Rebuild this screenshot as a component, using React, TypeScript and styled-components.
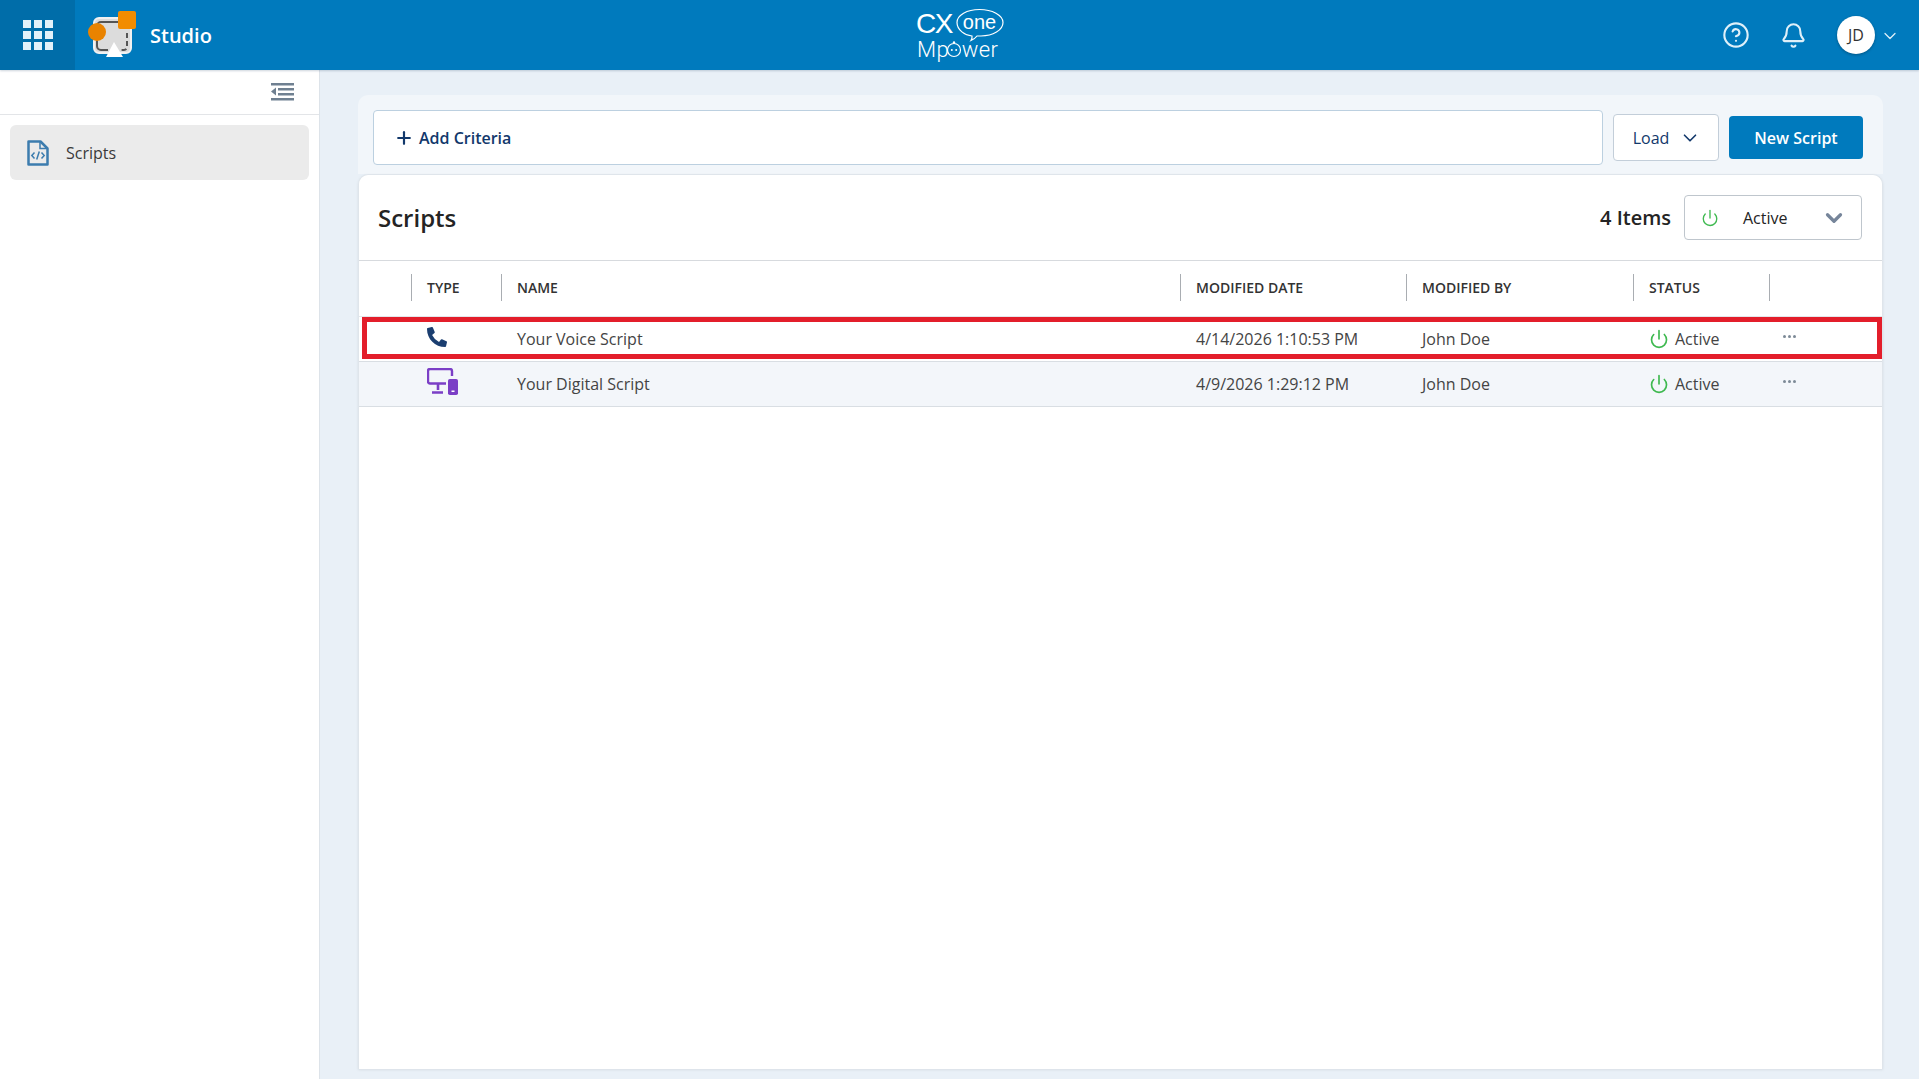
import React from "react";
import styled, { createGlobalStyle } from "styled-components";
import { Bell, ChevronDown, CircleHelp, Plus, Power } from "lucide-react";
import { FaPhoneAlt } from "react-icons/fa";

const Global = createGlobalStyle`
  html, body { margin: 0; padding: 0; height: 100%; }
  body { font-family: "Open Sans", "Noto Sans", sans-serif; color: #333; background: #e9f0f7; }
  #root { height: 100%; }
  * { box-sizing: border-box; }
`;

const Page = styled.div`
  display: flex;
  flex-direction: column;
  height: 1079px;
  overflow: hidden;
`;

const Header = styled.header`
  flex: 0 0 70px;
  display: flex;
  align-items: center;
  background: #007abd;
  box-shadow: 0 1px 2px rgba(0, 40, 80, 0.2);
  position: relative;
  z-index: 2;
`;

const HeaderSide = styled.div<{ $end?: boolean }>`
  flex: 1;
  height: 100%;
  display: flex;
  align-items: center;
  justify-content: ${(p) => (p.$end ? "flex-end" : "flex-start")};
`;

const Launcher = styled.div`
  width: 75px;
  height: 100%;
  background: #006da9;
  display: flex;
  align-items: center;
  justify-content: center;
`;

const AppLogo = styled.svg`
  width: 50px;
  height: 48px;
  margin-left: 13px;
`;

const AppName = styled.span`
  margin-left: 12px;
  color: #fff;
  font-size: 20px;
  font-weight: 600;
`;

const BrandLogo = styled.svg`
  width: 100px;
  height: 56px;
  flex: none;
`;

const HeaderIcon = styled.span<{ $gap: number }>`
  display: flex;
  color: #dff0f9;
  margin-right: ${(p) => p.$gap}px;
`;

const Avatar = styled.span`
  width: 38px;
  height: 38px;
  border-radius: 50%;
  background: #fff;
  color: #333;
  display: flex;
  align-items: center;
  justify-content: center;
  font-size: 16px;
  box-shadow: 0 1px 3px rgba(0, 0, 0, 0.3);
`;

const AvatarCaret = styled.span`
  display: flex;
  color: #dff0f9;
  margin: 2px 19px 0 5px;
`;

const Body = styled.div`
  flex: 1;
  display: flex;
  min-height: 0;
`;

const Sidebar = styled.aside`
  flex: 0 0 320px;
  background: #fff;
  border-right: 1px solid #dde3e9;
`;

const SidebarTop = styled.div`
  height: 45px;
  border-bottom: 1px solid #e3e5e8;
  display: flex;
  align-items: center;
  justify-content: flex-end;
  padding-right: 25px;
`;

const NavItem = styled.div`
  margin: 10px 10px 0;
  height: 55px;
  background: #ebebeb;
  border-radius: 6px;
  display: flex;
  align-items: center;
  padding-left: 17px;
  gap: 17px;
  font-size: 16px;
  color: #3a3a3a;
`;

const Main = styled.main`
  flex: 1;
  min-width: 0;
  padding: 25px 36px 10px 38px;
  display: flex;
  flex-direction: column;
`;

const FilterBar = styled.div`
  flex: 0 0 79px;
  background: #f2f6fa;
  border-radius: 10px 10px 0 0;
  display: flex;
  padding: 15px 20px 0 15px;
  align-items: flex-start;
`;

const CriteriaBox = styled.div`
  width: 1230px;
  height: 55px;
  background: #fff;
  border: 1px solid #bcd0e0;
  border-radius: 4px;
  display: flex;
  align-items: center;
  padding-left: 20px;
  gap: 5px;
  color: #12386b;
  font-size: 16px;
  font-weight: 600;
`;

const LoadButton = styled.div`
  width: 106px;
  height: 47px;
  margin: 4px 0 0 10px;
  background: #fff;
  border: 1px solid #c3ced9;
  border-radius: 4px;
  display: flex;
  align-items: center;
  justify-content: center;
  gap: 10px;
  padding-left: 2px;
  color: #12386b;
  font-size: 16px;
  font-weight: 500;
`;

const PrimaryButton = styled.div`
  width: 134px;
  height: 43px;
  margin: 6px 0 0 10px;
  background: #007abd;
  border-radius: 4px;
  color: #fff;
  display: flex;
  align-items: center;
  justify-content: center;
  font-size: 16px;
  font-weight: 600;
`;

const Card = styled.section`
  flex: 1;
  background: #fff;
  border: 1px solid #dfe5eb;
  border-bottom: 0;
  border-radius: 10px 10px 0 0;
  margin-top: 0;
  box-shadow: 0 1px 3px rgba(0, 0, 0, 0.08);
  display: flex;
  flex-direction: column;
  min-height: 0;
`;

const CardHeader = styled.div`
  flex: 0 0 86px;
  display: flex;
  align-items: center;
  padding: 0 20px 0 19px;
  border-bottom: 1px solid #d7dade;
`;

const CardTitle = styled.h2`
  margin: 0;
  flex: 1;
  font-size: 24px;
  font-weight: 600;
  color: #242424;
`;

const ItemCount = styled.span`
  font-size: 20px;
  font-weight: 600;
  color: #242424;
  margin-right: 13px;
`;

const StatusSelect = styled.div`
  width: 178px;
  height: 45px;
  border: 1px solid #bfc6cd;
  border-radius: 4px;
  display: flex;
  align-items: center;
  padding: 0 14px 0 16px;
  font-size: 16px;
  color: #242424;
`;

const SelectLabel = styled.span`
  flex: 1;
  padding-left: 24px;
`;

const columns = "52px 90px 679px 226px 227px 136px 1fr";

const HeadRow = styled.div`
  flex: 0 0 56px;
  display: grid;
  grid-template-columns: ${columns};
  align-items: center;
  border-bottom: 1px solid #e3e7eb;
`;

const HeadCell = styled.div<{ $rule?: boolean }>`
  height: 27px;
  margin-top: -2px;
  display: flex;
  align-items: center;
  padding-left: 15px;
  border-left: ${(p) => (p.$rule ? "1px solid #a9adb2" : "0")};
  font-size: 14px;
  font-weight: 600;
  color: #333;
  text-transform: uppercase;
`;

const Rows = styled.div`
  position: relative;
`;

const Row = styled.div<{ $shaded?: boolean }>`
  height: 45px;
  display: grid;
  grid-template-columns: ${columns};
  align-items: center;
  background: ${(p) => (p.$shaded ? "#f3f6fa" : "#fff")};
  border-bottom: 1px solid #d9dee3;
  font-size: 16px;
  color: #444;
`;

const Cell = styled.div`
  padding-left: 16px;
  white-space: nowrap;
`;

const StatusCell = styled(Cell)`
  display: flex;
  align-items: center;
  gap: 6px;
`;

const MoreDots = styled.span`
  display: flex;
  gap: 2px;
  margin: -5px 0 0 14px;
`;

const Dot = styled.i`
  width: 3px;
  height: 3px;
  border-radius: 50%;
  background: #7d8a97;
`;

const Highlight = styled.div`
  position: absolute;
  left: 3px;
  right: 0;
  top: 0;
  height: 42px;
  border: 5px solid #e31e2b;
  pointer-events: none;
`;

const rows = [
  { icon: "voice", name: "Your Voice Script", date: "4/14/2026 1:10:53 PM" },
  { icon: "digital", name: "Your Digital Script", date: "4/9/2026 1:29:12 PM" },
];

const heads = ["Type", "Name", "Modified Date", "Modified By", "Status"];

const GridIcon = () => (
  <svg width="30" height="30" viewBox="0 0 30 30" fill="#e3f1f9">
    {[0, 11, 22].flatMap((y) =>
      [0, 11, 22].map((x) => <rect key={`${x}-${y}`} x={x} y={y} width="8" height="8" />)
    )}
  </svg>
);

const StudioMark = () => (
  <AppLogo viewBox="0 0 50 48">
    <rect x="6" y="7" width="37" height="35" rx="5" fill="#dcdcdc" stroke="#f1f1f1" strokeWidth="2" />
    <path d="M36 11H13a4 4 0 0 0-4 4v20a4 4 0 0 0 4 4h7" fill="none" stroke="#555" strokeWidth="2" />
    <path d="M39 22v14a3 3 0 0 1-3 3h-4" fill="none" stroke="#555" strokeWidth="2" strokeDasharray="5 3" />
    <path d="M26 31l9 15H18z" fill="#fff" />
    <rect x="30" y="0" width="18" height="18" rx="2" fill="#f28c00" />
    <circle cx="9" cy="21" r="9" fill="#e98300" />
  </AppLogo>
);

const CxLogo = () => (
  <BrandLogo viewBox="0 0 100 56">
    <text x="6" y="26" fill="#fff" fontFamily="'Liberation Sans', sans-serif" fontSize="28" letterSpacing="-1.5">CX</text>
    <path
      d="M62 29c-7-.5-15-6-15-13.500C47 8 57 2.500 69.500 2.500S93 8 93 15.500 83 29 71 29c-1.500 0-3 0-4 0-1.500 2-3.500 3.500-6 4.500 1-1.500 1.200-3 1-4.500z"
      fill="none"
      stroke="#fff"
      strokeWidth="1.2"
    />
    <text x="69.500" y="22" textAnchor="middle" fill="#fff" fontFamily="'Liberation Sans', sans-serif" fontSize="20">one</text>
    <text x="7" y="50" fill="#fff" fontFamily="'Roboto', sans-serif" fontWeight="300" fontSize="22" textLength="81">
      Mp<tspan fill="none">o</tspan>wer
    </text>
    <circle cx="44" cy="43" r="6.500" fill="none" stroke="#fff" strokeWidth="1.2" />
    <circle cx="44" cy="35.500" r="1.200" fill="#fff" />
    <circle cx="41.800" cy="43" r="1" fill="#fff" />
    <circle cx="46.200" cy="43" r="1" fill="#fff" />
  </BrandLogo>
);

const CollapseIcon = () => (
  <svg width="23" height="18" viewBox="0 0 23 18" fill="#6f8091">
    <rect x="0" y="0" width="23" height="2.500" />
    <rect x="7" y="5" width="16" height="2.500" />
    <rect x="7" y="10" width="16" height="2.500" />
    <rect x="0" y="15" width="23" height="2.500" />
    <path d="M5 4.500v8L0 8.500z" />
  </svg>
);

const ScriptFileIcon = () => (
  <svg width="22" height="26" viewBox="0 0 22 26" fill="none" stroke="#3c7cae">
    <path d="M1.500 1.500h12l7 7v16h-19z" strokeWidth="2.500" strokeLinejoin="round" />
    <path d="M13 1.500v7h7" strokeWidth="1.500" />
    <path d="M7.500 12.500L4.800 15.500l2.700 3M14.500 12.500l2.700 3-2.700 3M12.300 11.500l-2.600 8" strokeWidth="1.500" />
  </svg>
);

const DigitalIcon = () => (
  <svg width="31" height="27" viewBox="0 0 31 27" fill="none">
    <path d="M19 15.500H3a2 2 0 0 1-2-2V3a2 2 0 0 1 2-2h20a2 2 0 0 1 2 2v5" stroke="#7b3fc6" strokeWidth="2.400" />
    <path d="M11 16v6M5 24.500h11" stroke="#7b3fc6" strokeWidth="2.600" />
    <rect x="21" y="11" width="10" height="16" rx="1.800" fill="#7b3fc6" />
    <rect x="24.500" y="22.500" width="3" height="1.500" fill="#fff" />
  </svg>
);

export default function App() {
  return (
    <Page>
      <Global />
      <Header>
        <HeaderSide>
          <Launcher><GridIcon /></Launcher>
          <StudioMark />
          <AppName>Studio</AppName>
        </HeaderSide>
        <CxLogo />
        <HeaderSide $end>
          <HeaderIcon $gap={30}><CircleHelp size={28} strokeWidth={1.8} /></HeaderIcon>
          <HeaderIcon $gap={30}><Bell size={27} strokeWidth={1.8} /></HeaderIcon>
          <Avatar>JD</Avatar>
          <AvatarCaret><ChevronDown size={20} strokeWidth={1.5} /></AvatarCaret>
        </HeaderSide>
      </Header>
      <Body>
        <Sidebar>
          <SidebarTop><CollapseIcon /></SidebarTop>
          <NavItem><ScriptFileIcon />Scripts</NavItem>
        </Sidebar>
        <Main>
          <FilterBar>
            <CriteriaBox><Plus size={20} strokeWidth={2.6} />Add Criteria</CriteriaBox>
            <LoadButton>Load<ChevronDown size={22} strokeWidth={1.8} /></LoadButton>
            <PrimaryButton>New Script</PrimaryButton>
          </FilterBar>
          <Card>
            <CardHeader>
              <CardTitle>Scripts</CardTitle>
              <ItemCount>4 Items</ItemCount>
              <StatusSelect>
                <Power size={18} color="#3fb950" strokeWidth={1.8} />
                <SelectLabel>Active</SelectLabel>
                <ChevronDown size={26} color="#76859a" strokeWidth={3} />
              </StatusSelect>
            </CardHeader>
            <HeadRow>
              <HeadCell />
              {heads.map((h) => <HeadCell key={h} $rule>{h}</HeadCell>)}
              <HeadCell $rule />
            </HeadRow>
            <Rows>
              {rows.map((r, i) => (
                <Row key={r.name} $shaded={i === 1}>
                  <span />
                  <Cell>{r.icon === "voice" ? <FaPhoneAlt size={20} color="#1b3e70" /> : <DigitalIcon />}</Cell>
                  <Cell>{r.name}</Cell>
                  <Cell>{r.date}</Cell>
                  <Cell>John Doe</Cell>
                  <StatusCell><Power size={20} color="#3fb950" strokeWidth={2} />Active</StatusCell>
                  <MoreDots><Dot /><Dot /><Dot /></MoreDots>
                </Row>
              ))}
              <Highlight />
            </Rows>
          </Card>
        </Main>
      </Body>
    </Page>
  );
}
